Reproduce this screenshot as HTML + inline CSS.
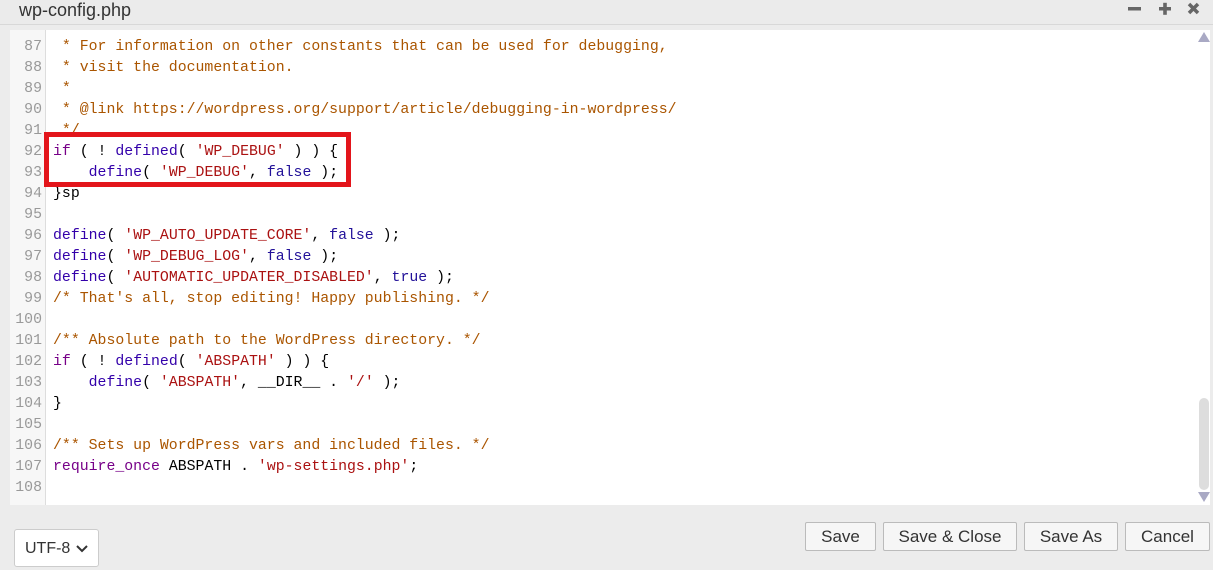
<!DOCTYPE html>
<html><head><meta charset="utf-8"><style>
*{margin:0;padding:0;box-sizing:border-box}
body{width:1213px;height:570px;background:#ececec;font-family:"Liberation Sans",sans-serif;position:relative;overflow:hidden}
.title{position:absolute;left:0;top:0;width:1213px;height:25px;background:#ebebeb;border-bottom:1px solid #d8d8d8}
.title span{position:absolute;left:19px;top:0px;font-size:18px;color:#333}
.ed{position:absolute;left:10px;top:30px;width:1200px;height:475px;background:#fff;overflow:hidden}
.gut{position:absolute;left:0;top:0;width:36px;height:475px;background:#f7f7f7;border-right:1px solid #ddd}
.code{position:absolute;left:0;top:-14px;font-family:"Liberation Mono",monospace;font-size:14.85px;line-height:21px;white-space:pre}
.ln{display:inline-block;width:43px;text-align:right;padding-right:11px;color:#999}
.c{color:#a50}.k{color:#708}.b{color:#30a}.s{color:#a11}.a{color:#219}
.sb{position:absolute;left:1188px;top:0;width:12px;height:475px}
.thumb{position:absolute;left:1px;top:368px;width:10px;height:92px;background:#ddd;border-radius:5px}
.red{position:absolute;left:44px;top:132px;width:307px;height:55px;border:5px solid #e3151b}
.btn{position:absolute;top:522px;height:29px;border:1px solid #bbb;border-radius:2px;background:#f6f6f6;font-size:17px;color:#333;text-align:center;line-height:27px}
.sel{position:absolute;left:14px;top:529px;width:85px;height:38px;border:1px solid #ccc;border-radius:3px;background:#fff;font-size:16px;color:#333;padding:10px 0 0 10px}
</style></head><body>
<div class="title"><span>wp-config.php</span>
<svg width="80" height="20" style="position:absolute;left:1125px;top:0">
<rect x="3" y="7" width="13" height="3.5" fill="#666"/>
<rect x="34" y="7" width="12" height="3.5" fill="#666"/><rect x="38.2" y="2.8" width="3.6" height="12" fill="#666"/>
<path d="M64 4 L73 13 M73 4 L64 13" stroke="#666" stroke-width="3.5"/>
</svg></div>
<div class="ed"><div class="gut"></div>
<div class="code"><span class="ln">86</span><span class="c"> */</span>
<span class="ln">87</span><span class="c"> * For information on other constants that can be used for debugging,</span>
<span class="ln">88</span><span class="c"> * visit the documentation.</span>
<span class="ln">89</span><span class="c"> *</span>
<span class="ln">90</span><span class="c"> * @link https://wordpress.org/support/article/debugging-in-wordpress/</span>
<span class="ln">91</span><span class="c"> */</span>
<span class="ln">92</span><span class="k">if</span> ( ! <span class="b">defined</span>( <span class="s">'WP_DEBUG'</span> ) ) {
<span class="ln">93</span>    <span class="b">define</span>( <span class="s">'WP_DEBUG'</span>, <span class="a">false</span> );
<span class="ln">94</span>}sp
<span class="ln">95</span>
<span class="ln">96</span><span class="b">define</span>( <span class="s">'WP_AUTO_UPDATE_CORE'</span>, <span class="a">false</span> );
<span class="ln">97</span><span class="b">define</span>( <span class="s">'WP_DEBUG_LOG'</span>, <span class="a">false</span> );
<span class="ln">98</span><span class="b">define</span>( <span class="s">'AUTOMATIC_UPDATER_DISABLED'</span>, <span class="a">true</span> );
<span class="ln">99</span><span class="c">/* That's all, stop editing! Happy publishing. */</span>
<span class="ln">100</span>
<span class="ln">101</span><span class="c">/** Absolute path to the WordPress directory. */</span>
<span class="ln">102</span><span class="k">if</span> ( ! <span class="b">defined</span>( <span class="s">'ABSPATH'</span> ) ) {
<span class="ln">103</span>    <span class="b">define</span>( <span class="s">'ABSPATH'</span>, __DIR__ . <span class="s">'/'</span> );
<span class="ln">104</span>}
<span class="ln">105</span>
<span class="ln">106</span><span class="c">/** Sets up WordPress vars and included files. */</span>
<span class="ln">107</span><span class="k">require_once</span> ABSPATH . <span class="s">'wp-settings.php'</span>;
<span class="ln">108</span></div>
<div class="sb"><svg width="12" height="475" style="position:absolute;left:0;top:0"><polygon points="0,12 12,12 6,2" fill="#a9a9c4"/><polygon points="0,462 12,462 6,472" fill="#a9a9c4"/></svg><div class="thumb"></div></div>
</div>
<div class="red"></div>
<div class="sel">UTF-8 <svg width="14" height="10" style="vertical-align:middle"><path d="M2 2 L7 7 L12 2" stroke="#333" stroke-width="2" fill="none"/></svg></div>
<div class="btn" style="left:805px;width:71px">Save</div>
<div class="btn" style="left:883px;width:134px">Save &amp; Close</div>
<div class="btn" style="left:1024px;width:94px">Save As</div>
<div class="btn" style="left:1125px;width:85px">Cancel</div>
</body></html>
